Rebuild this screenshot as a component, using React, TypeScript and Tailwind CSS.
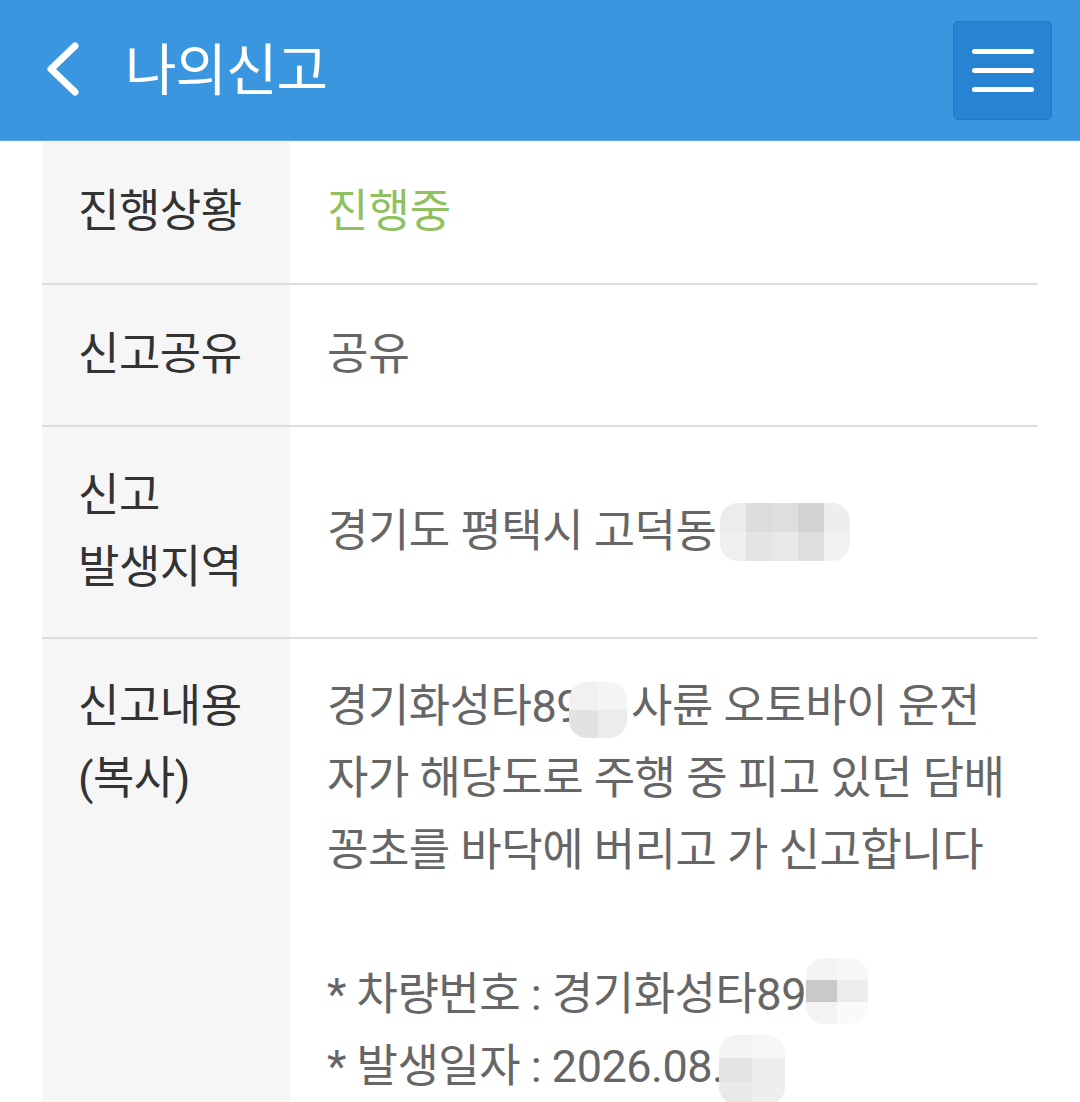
import React from "react";

const FONT = { fontFamily: 'Roboto, "Noto Sans CJK KR", "Noto Sans", sans-serif' };

function Blob({ w, h, cells, cols, className = "" }: { w: number; h: number; cells: string[]; cols: number; className?: string }) {
  return (
    <span
      className={"inline-grid overflow-hidden rounded-[18px] align-middle " + className}
      style={{ width: w, height: h, gridTemplateColumns: `repeat(${cols}, 1fr)` }}
    >
      {cells.map((c, i) => (
        <span key={i} style={{ background: c }} />
      ))}
    </span>
  );
}

export default function App() {
  return (
    <div className="w-[1080px] min-h-[1102px] bg-white overflow-hidden" style={FONT}>
      <header className="h-[141px] bg-[#3a97df] flex items-center justify-between pl-[44px] pr-[28px] border-b border-[#5aa9e6]">
        <div className="flex items-center">
          <svg width="40" height="56" viewBox="0 0 40 56" className="mt-[-2px]">
            <polyline points="31,5 7,28 31,51" fill="none" stroke="#fff" strokeWidth="7" strokeLinecap="round" strokeLinejoin="round" />
          </svg>
          <h1 className="ml-[41px] text-white text-[56px] leading-none mt-[2px] tracking-[-1px]">나의신고</h1>
        </div>
        <button className="w-[99px] h-[99px] rounded-[5px] bg-[#2784d3] border border-[#2279c6] flex flex-col items-center justify-center gap-[14px]">
          <span className="block w-[62px] h-[5px] rounded-full bg-white" />
          <span className="block w-[62px] h-[5px] rounded-full bg-white" />
          <span className="block w-[62px] h-[5px] rounded-full bg-white" />
        </button>
      </header>

      <div className="mx-[42px] grid grid-cols-[248px_1fr] text-[45px] leading-[72px]">
        {/* Row 1 */}
        <div className="bg-[#f6f6f6] pl-[36px] py-[35px] border-b-2 border-[#dddddd] text-[#333] tracking-[-0.5px]">진행상황</div>
        <div className="pl-[37px] py-[35px] border-b-2 border-[#dddddd] text-[#8fc160]">진행중</div>

        {/* Row 2 */}
        <div className="bg-[#f6f6f6] pl-[36px] py-[34px] border-b-2 border-[#dddddd] text-[#333] tracking-[-0.5px]">신고공유</div>
        <div className="pl-[37px] py-[34px] border-b-2 border-[#dddddd] text-[#666]">공유</div>

        {/* Row 3 */}
        <div className="bg-[#f6f6f6] pl-[36px] py-[33px] border-b-2 border-[#dddddd] text-[#333] tracking-[-0.5px]">
          신고
          <br />
          발생지역
        </div>
        <div className="pl-[37px] py-[33px] border-b-2 border-[#dddddd] text-[#666] flex items-center">
          <span className="whitespace-nowrap tracking-[-0.5px]">
            경기도 평택시 고덕동
            <Blob
              w={130}
              h={58}
              cols={5}
              className="ml-[4px] mt-[-6px]"
              cells={["#ececec", "#dcdcdc", "#dedede", "#d3d3d3", "#eeeeee", "#efefef", "#e4e4e4", "#e9e9e9", "#dedede", "#f2f2f2"]}
            />
          </span>
        </div>

        {/* Row 4 */}
        <div className="bg-[#f6f6f6] pl-[36px] pt-[32px] pb-[40px] text-[#333] tracking-[-0.5px]">
          신고내용
          <br />
          (복사)
        </div>
        <div className="pl-[37px] pt-[32px] pb-[40px] text-[#666] whitespace-nowrap tracking-[-0.5px]">
          <div>
            경기화성타89
            <Blob w={58} h={56} cols={2} className="ml-[-12px] mr-[4px]" cells={["#f1f1f1", "#f5f5f5", "#e2e2e2", "#ececec"]} />
            사륜 오토바이 운전
          </div>
          <div>자가 해당도로 주행 중 피고 있던 담배</div>
          <div>꽁초를 바닥에 버리고 가 신고합니다</div>
          <div className="h-[72px]" />
          <div>
            * 차량번호 : 경기화성타89
            <Blob w={62} h={66} cols={2} className="ml-[0px] mt-[-14px]" cells={["#f4f4f4", "#f7f7f7", "#c9c9c9", "#ececec", "#f3f3f3", "#fafafa"]} />
          </div>
          <div>
            * 발생일자 : 2026.08.
            <Blob w={66} h={70} cols={2} className="ml-[-4px]" cells={["#f3f3f3", "#f6f6f6", "#e4e4e4", "#ededed", "#e9e9e9", "#eeeeee"]} />
          </div>
        </div>
      </div>
    </div>
  );
}
